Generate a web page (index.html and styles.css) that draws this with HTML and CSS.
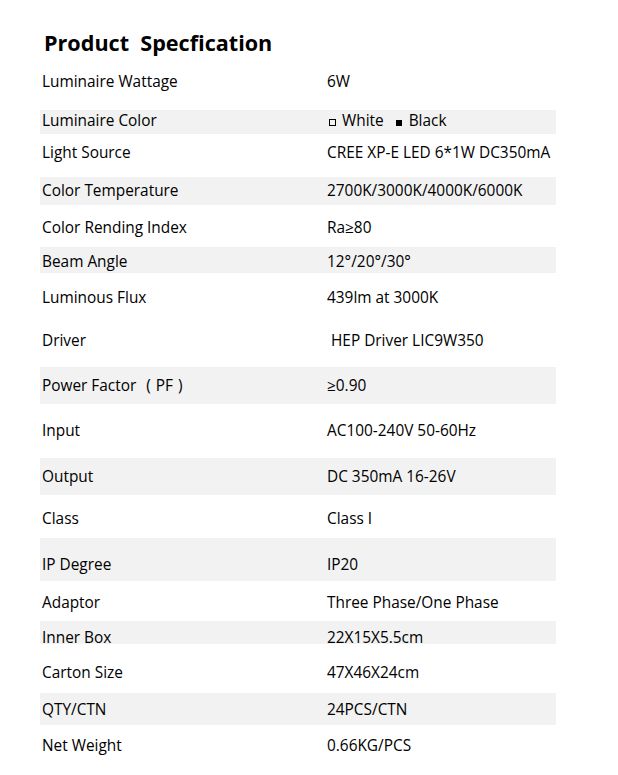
FILE: index.html
```html
<!DOCTYPE html>
<html>
<head>
<meta charset="utf-8">
<link rel="stylesheet" href="styles.css">
</head>
<body>
<div class="page">
  <h1 class="title">Product&nbsp; Specfication</h1>
  <div class="spec">
    <div class="row"><span class="k">Luminaire Wattage</span><span class="v">6W</span></div>
    <div class="row alt"><span class="k">Luminaire Color</span><span class="v"><span class="sq hollow"></span>White<span class="sq filled"></span>Black</span></div>
    <div class="row"><span class="k">Light Source</span><span class="v">CREE XP-E LED 6*1W DC350mA</span></div>
    <div class="row alt"><span class="k">Color Temperature</span><span class="v">2700K/3000K/4000K/6000K</span></div>
    <div class="row"><span class="k">Color Rending Index</span><span class="v">Ra≥80</span></div>
    <div class="row alt"><span class="k">Beam Angle</span><span class="v">12°/20°/30°</span></div>
    <div class="row"><span class="k">Luminous Flux</span><span class="v">439lm at 3000K</span></div>
    <div class="row"><span class="k">Driver</span><span class="v indent">HEP Driver LIC9W350</span></div>
    <div class="row alt"><span class="k">Power Factor<span class="par open">(</span>PF<span class="par close">)</span></span><span class="v">≥0.90</span></div>
    <div class="row"><span class="k">Input</span><span class="v">AC100-240V 50-60Hz</span></div>
    <div class="row alt"><span class="k">Output</span><span class="v">DC 350mA 16-26V</span></div>
    <div class="row"><span class="k">Class</span><span class="v">Class I</span></div>
    <div class="row alt"><span class="k">IP Degree</span><span class="v">IP20</span></div>
    <div class="row"><span class="k">Adaptor</span><span class="v">Three Phase/One Phase</span></div>
    <div class="row alt"><span class="k">Inner Box</span><span class="v">22X15X5.5cm</span></div>
    <div class="row"><span class="k">Carton Size</span><span class="v">47X46X24cm</span></div>
    <div class="row alt"><span class="k">QTY/CTN</span><span class="v">24PCS/CTN</span></div>
    <div class="row"><span class="k">Net Weight</span><span class="v">0.66KG/PCS</span></div>
  </div>
</div>
</body>
</html>
```
FILE: styles.css
```css
html, body {
  margin: 0;
  padding: 0;
  background: #ffffff;
}
body {
  font-family: "Open Sans", "Noto Sans", sans-serif;
  color: #000000;
}
.page {
  padding: 0 62px 0 40px;
}
.title {
  margin: 0;
  padding: 28px 0 0 4px;
  height: 34px;
  font-size: 21.6px;
  line-height: 30px;
  font-weight: 700;
  color: #000000;
}
.spec {
  display: flex;
  flex-direction: column;
}
.row {
  display: grid;
  grid-template-columns: 285px 1fr;
  box-sizing: border-box;
  font-size: 15.4px;
  line-height: 20px;
  padding-left: 2px;
}
.row.alt {
  background: #f2f2f2;
}
.v.indent {
  padding-left: 4px;
}
.par.open {
  margin: 0 5px 0 10px;
}
.par.close {
  margin-left: 5px;
}
.sq {
  display: inline-block;
  width: 7px;
  height: 7px;
  box-sizing: border-box;
  margin-right: 6px;
  vertical-align: 0;
}
.sq.hollow {
  border: 1px solid #000;
  margin-left: 2px;
}
.sq.filled {
  background: #000;
  width: 6px;
  height: 6px;
  margin-left: 12px;
  margin-right: 7px;
}
.row:nth-child(1)  { height: 48px; padding-top: 10px; }
.row:nth-child(2)  { height: 24px; padding-top: 1px; }
.row:nth-child(3)  { height: 43px; padding-top: 9px; }
.row:nth-child(4)  { height: 28px; padding-top: 4px; }
.row:nth-child(5)  { height: 42px; padding-top: 13px; }
.row:nth-child(6)  { height: 26px; padding-top: 5px; }
.row:nth-child(7)  { height: 45px; padding-top: 15px; }
.row:nth-child(8)  { height: 49px; padding-top: 13px; }
.row:nth-child(9)  { height: 37px; padding-top: 9px; }
.row:nth-child(10) { height: 54px; padding-top: 17px; }
.row:nth-child(11) { height: 37px; padding-top: 9px; }
.row:nth-child(12) { height: 43px; padding-top: 14px; }
.row:nth-child(13) { height: 43px; padding-top: 17px; }
.row:nth-child(14) { height: 40px; padding-top: 12px; }
.row:nth-child(15) { height: 23px; padding-top: 7px; }
.row:nth-child(16) { height: 49px; padding-top: 19px; }
.row:nth-child(17) { height: 32px; padding-top: 7px; }
.row:nth-child(18) { height: 40px; padding-top: 11px; }
```
